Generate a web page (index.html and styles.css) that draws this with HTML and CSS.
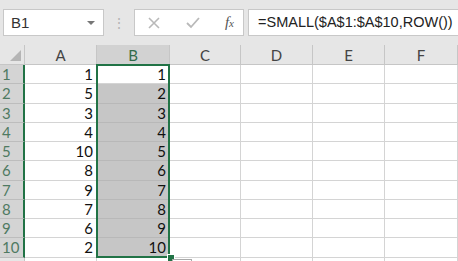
FILE: index.html
```html
<!DOCTYPE html>
<html lang="en">
<head>
    <meta charset="UTF-8">
    <title>Sheet</title>
    <link rel="stylesheet" href="styles.css">
</head>
<body>
    <div class="toolbar">
        <div class="namebox">
            <span>B1</span>
            <span class="caret"></span>
        </div>
        <div class="grip">&#8942;</div>
        <div class="fbtns">
            <svg width="14" height="14" viewBox="0 0 14 14"><path d="M2 2L12 12M12 2L2 12" stroke="#b9b9b9" stroke-width="1.6"/></svg>
            <svg width="16" height="14" viewBox="0 0 16 14"><path d="M2 7L6 11L14 2" stroke="#b9b9b9" stroke-width="1.8" fill="none"/></svg>
            <span class="fx">f<small>x</small></span>
        </div>
        <div class="formula">=SMALL($A$1:$A$10,ROW())</div>
    </div>

    <div class="sheet">
        <div class="grid" id="grid">
            <div class="corner"><span class="tri"></span></div>
            <div class="colhead">A</div>
            <div class="colhead sel">B</div>
            <div class="colhead">C</div>
            <div class="colhead">D</div>
            <div class="colhead">E</div>
            <div class="colhead">F</div>
        </div>
        <div class="selection"></div>
        <div class="handle"></div>
        <div class="quick"></div>
    </div>

    <script>
        // Build the rows: column A values and column B results
        var colA = [1, 5, 3, 4, 10, 8, 9, 7, 6, 2];
        var grid = document.getElementById('grid');
        var html = '';
        for (var i = 0; i < 10; i++) {
            html += '<div class="rowhead">' + (i + 1) + '</div>';
            html += '<div class="cell">' + colA[i] + '</div>';
            html += '<div class="cell ' + (i === 0 ? 'active' : 'filled') + '">' + (i + 1) + '</div>';
            html += '<div class="cell"></div><div class="cell"></div><div class="cell"></div><div class="cell"></div>';
        }
        html += '<div class="rowhead last"></div>';
        for (var j = 0; j < 6; j++) html += '<div class="cell"></div>';
        grid.insertAdjacentHTML('beforeend', html);
    </script>
</body>
</html>
```

FILE: styles.css
```css
body {
    margin: 0;
    width: 458px;
    height: 261px;
    overflow: hidden;
    background: #fff;
    font-family: Lato, "Liberation Sans", sans-serif;
}
.toolbar {
    height: 45px;
    background: #e6e6e6;
    display: flex;
    align-items: center;
    padding: 0 0 0 3px;
    box-sizing: border-box;
}
.namebox {
    width: 101px;
    height: 27px;
    box-sizing: border-box;
    background: #fff;
    border: 1px solid #c8c8c8;
    display: flex;
    align-items: center;
    justify-content: space-between;
    padding: 0 8px 0 7px;
    font-family: "Liberation Sans", sans-serif;
    font-size: 15px;
    color: #333;
}
.caret {
    width: 0;
    height: 0;
    border-left: 4px solid transparent;
    border-right: 4px solid transparent;
    border-top: 4px solid #777;
}
.grip {
    width: 30px;
    text-align: center;
    color: #b5b5b5;
    font-size: 14px;
}
.fbtns {
    width: 110px;
    height: 27px;
    box-sizing: border-box;
    background: #fff;
    border: 1px solid #c8c8c8;
    display: flex;
    align-items: center;
    justify-content: space-between;
    padding: 0 9px 0 12px;
}
.fx {
    font-family: "Liberation Serif", serif;
    font-style: italic;
    font-size: 15px;
    color: #555;
}
.fx small {
    font-size: 11px;
}
.formula {
    flex: 1;
    height: 27px;
    margin-left: 4px;
    box-sizing: border-box;
    background: #fff;
    border: 1px solid #c8c8c8;
    border-right: none;
    padding-left: 9px;
    line-height: 25px;
    font-family: "Liberation Sans", sans-serif;
    font-size: 14.5px;
    color: #222;
}
.sheet {
    position: relative;
    height: 216px;
    overflow: hidden;
}
.grid {
    display: grid;
    grid-template-columns: 25px 72px 73px 71px 72px 72px 73px;
    grid-template-rows: 20px repeat(10, 19.25px) 4px;
}
.corner {
    background: #e6e6e6;
    border-bottom: 1px solid #c6c6c6;
    border-right: 1px solid #c6c6c6;
    position: relative;
}
.tri {
    position: absolute;
    right: 3px;
    bottom: 3px;
    width: 0;
    height: 0;
    border-left: 11px solid transparent;
    border-bottom: 11px solid #b5b5b5;
}
.colhead {
    background: #e6e6e6;
    border-right: 1px solid #c6c6c6;
    border-bottom: 1px solid #c6c6c6;
    text-align: center;
    font-size: 15px;
    line-height: 21px;
    color: #444;
}
.colhead.sel {
    background: #d2d2d2;
    color: #326b4b;
}
.rowhead {
    background: #d4d4d4;
    border-bottom: 1px solid #bdbdbd;
    border-right: 2px solid #217346;
    font-size: 15px;
    line-height: 19px;
    padding-left: 2px;
    color: #4f7a62;
}
.rowhead.last {
    background: #e6e6e6;
    border-right: 1px solid #c6c6c6;
    border-bottom: none;
}
.cell {
    border-right: 1px solid #d4d4d4;
    border-bottom: 1px solid #d4d4d4;
    text-align: right;
    padding-right: 3px;
    font-size: 15px;
    line-height: 19px;
    color: #111;
    overflow: hidden;
}
.cell.filled {
    background: #c6c6c6;
    border-bottom-color: #b8b8b8;
}
.selection {
    position: absolute;
    left: 96px;
    top: 19px;
    width: 74px;
    height: 194px;
    border: 2px solid #217346;
    box-sizing: border-box;
    pointer-events: none;
}
.handle {
    position: absolute;
    left: 167px;
    top: 209px;
    width: 6px;
    height: 6px;
    background: #217346;
    border: 1px solid #fff;
}
.quick {
    position: absolute;
    left: 172px;
    top: 214px;
    width: 18px;
    height: 14px;
    border: 1px solid #aaa;
    background: #fff;
}
```
